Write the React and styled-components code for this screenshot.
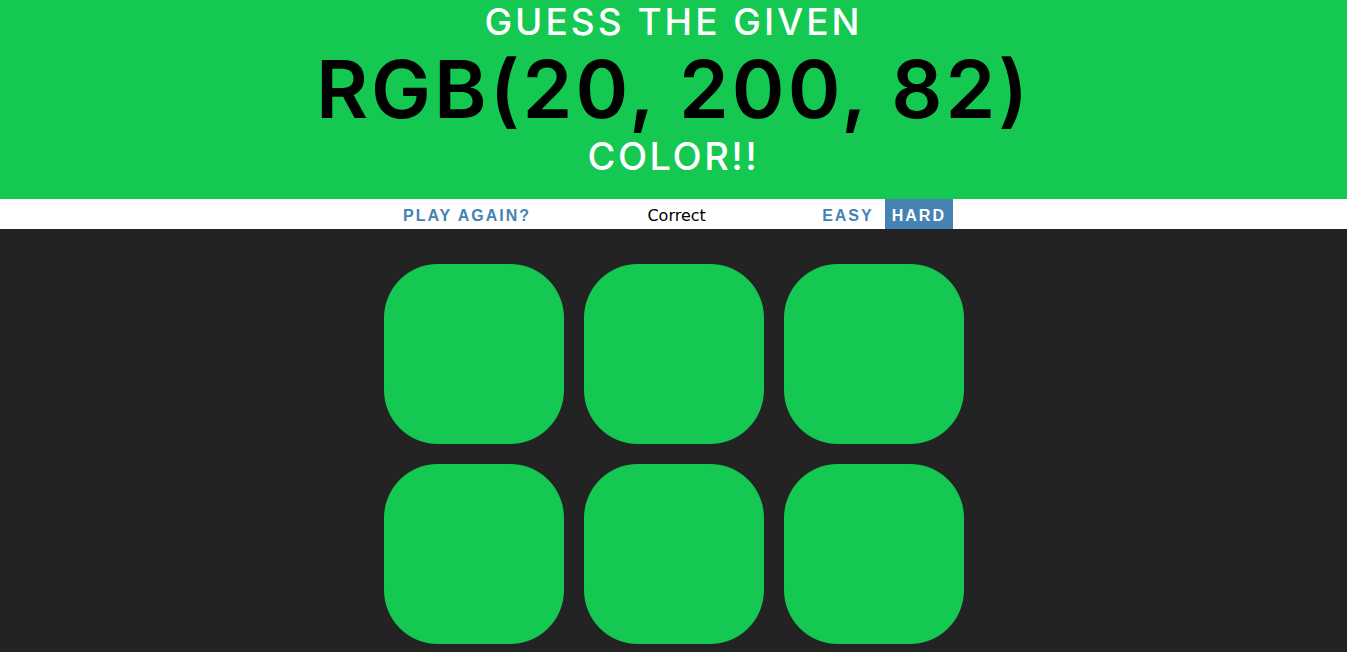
import React from "react";
import styled, { createGlobalStyle } from "styled-components";

const GlobalStyle = createGlobalStyle`
  html, body { margin: 0; padding: 0; }
  body {
    background: #232323;
    font-family: "DejaVu Sans", "Liberation Sans", sans-serif;
  }
`;

const Header = styled.h1`
  margin: 0;
  padding: 1px 0 20px;
  background: rgb(20, 200, 82);
  color: #ffffff;
  text-align: center;
  font-family: Inter, "DejaVu Sans", sans-serif;
  text-transform: uppercase;
  display: flex;
  flex-direction: column;
  align-items: center;
`;

const Line = styled.span`
  display: block;
  font-size: ${(p) => p.$size}px;
  line-height: ${(p) => p.$lh}px;
  font-weight: ${(p) => p.$weight || 500};
  color: ${(p) => p.$color || "#ffffff"};
  letter-spacing: ${(p) => p.$ls || 0}px;
`;

const Stripe = styled.div`
  background: #ffffff;
  height: 30px;
  display: flex;
  justify-content: center;
  align-items: stretch;
`;

const Button = styled.button`
  border: none;
  margin: 0;
  padding: 3px ${(p) => p.$pr || 6}px 0 ${(p) => p.$pl || 6}px;
  height: 100%;
  background: ${(p) => (p.$selected ? "steelblue" : "transparent")};
  color: ${(p) => (p.$selected ? "#ffffff" : "steelblue")};
  font-family: "Liberation Sans", Arial, sans-serif;
  font-weight: 700;
  font-size: 16px;
  letter-spacing: 2px;
  text-transform: uppercase;
  cursor: pointer;
  outline: none;
  margin-left: ${(p) => p.$ml || 0}px;
`;

const Message = styled.span`
  width: 279px;
  padding-top: 2px;
  display: flex;
  align-items: center;
  justify-content: center;
  font-size: 16px;
  color: #000000;
`;

const Board = styled.div`
  display: grid;
  grid-template-columns: repeat(3, 180px);
  grid-auto-rows: 180px;
  gap: 20px;
  justify-content: center;
  padding: 35px 0 20px;
`;

const Square = styled.div`
  background: ${(p) => p.$color};
  border-radius: 30%;
`;

const colors = Array.from({ length: 6 }, () => "rgb(20, 200, 82)");

export default function App() {
  return (
    <>
      <GlobalStyle />
      <Header>
        <Line $size={37} $lh={42} $ls={3}>Guess the given</Line>
        <Line $size={80} $lh={91} $weight={600} $ls={3} $color="#000000">
          RGB(20, 200, 82)
        </Line>
        <Line $size={38} $lh={45} $ls={2.5}>Color!!</Line>
      </Header>
      <Stripe>
        <Button $pl={9}>Play again?</Button>
        <Message>Correct</Message>
        <Button>Easy</Button>
        <Button $selected $ml={5} $pl={7} $pr={7}>Hard</Button>
      </Stripe>
      <Board>
        {colors.map((c, i) => (
          <Square key={i} $color={c} />
        ))}
      </Board>
    </>
  );
}
